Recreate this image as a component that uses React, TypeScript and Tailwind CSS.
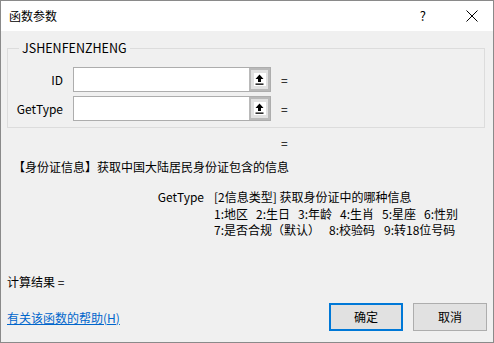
import React from "react";

const font = { fontFamily: '"Noto Sans CJK SC", "Noto Sans", sans-serif' };

function ArrowBtn() {
  return (
    <div className="w-[21px] h-full bg-[#e1e1e1] border-[2px] border-[#b9b9b9] flex items-center justify-center">
      <div className="w-[12px] h-[13px] bg-white flex items-center justify-center">
        <svg width="9" height="11" viewBox="0 0 9 11">
          <path d="M4.5 0.5 L8.5 5 L6 5 L6 8 L3 8 L3 5 L0.5 5 Z" fill="#000" />
          <rect x="0.5" y="9.5" width="8" height="1.3" fill="#000" />
        </svg>
      </div>
    </div>
  );
}

function ArgRow({ label }: { label: string }) {
  return (
    <div className="flex items-center h-[25px]">
      <div className="w-[47px] text-right">{label}</div>
      <div className="ml-[10px] flex h-full border border-[#adadad]">
        <div className="w-[175px] bg-white" />
        <ArrowBtn />
      </div>
      <div className="ml-[10px]">=</div>
    </div>
  );
}

export default function App() {
  return (
    <div
      className="w-[494px] h-[343px] border border-[#8a8a8a] bg-[#f0f0f0] text-[12px] leading-[16px] text-black flex flex-col"
      style={font}
    >
      <div className="h-[30px] bg-white flex items-center pl-[8px]">
        <span>函数参数</span>
        <div className="ml-auto flex items-center">
          <span className="text-[13px] mr-[40px]">?</span>
          <svg width="12" height="12" viewBox="0 0 12 12" className="mr-[15px]">
            <path d="M0.5 0.5 L11.5 11.5 M11.5 0.5 L0.5 11.5" stroke="#000" strokeWidth="1" />
          </svg>
        </div>
      </div>

      <fieldset className="mt-[9px] ml-[6px] mr-[8px] border border-[#dcdcdc] pl-[8px] pt-[11px] pb-[6px] flex flex-col gap-[4px]">
        <legend className="ml-[3px] px-[3px] text-[12.5px]">JSHENFENZHENG</legend>
        <ArgRow label="ID" />
        <ArgRow label="GetType" />
      </fieldset>

      <div className="mt-[7px] pl-[280px]">=</div>
      <div className="mt-[8px] pl-[12px]">【身份证信息】获取中国大陆居民身份证包含的信息</div>

      <div className="mt-[14px] flex leading-[16.5px]">
        <div className="w-[203px] text-right">GetType</div>
        <div className="ml-[10px] flex flex-col">
          <div>[2信息类型] 获取身份证中的哪种信息</div>
          <div className="flex gap-[8px]">
            <span>1:地区</span><span>2:生日</span><span>3:年龄</span><span>4:生肖</span><span>5:星座</span><span>6:性别</span>
          </div>
          <div className="flex gap-[9px]">
            <span>7:是否合规（默认）</span><span>8:校验码</span><span>9:转18位号码</span>
          </div>
        </div>
      </div>

      <div className="mt-[35px] pl-[6px]">计算结果 =</div>

      <div className="mt-[13px] flex items-center pl-[6px] pr-[6px]">
        <a className="text-[#0066cc] underline mt-[2px]">有关该函数的帮助(H)</a>
        <div className="ml-auto flex gap-[10px]">
          <button className="w-[74px] h-[28px] bg-[#e1e1e1] border-2 border-[#0078d7]">确定</button>
          <button className="w-[74px] h-[28px] bg-[#e1e1e1] border border-[#adadad]">取消</button>
        </div>
      </div>
    </div>
  );
}
